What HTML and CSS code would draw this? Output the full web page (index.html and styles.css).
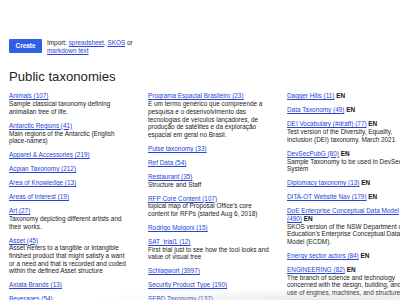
FILE: index.html
```html
<!DOCTYPE html>
<html lang="en">
<head>
<meta charset="utf-8">
<title>Public taxonomies</title>
<link rel="stylesheet" href="styles.css">
</head>
<body>
<main class="page">
  <div class="toolbar">
    <button class="btn-create" type="button">Create</button>
    <p class="import">Import: <a href="#">spreadsheet</a>, <a href="#">SKOS</a> or <a href="#">markdown text</a></p>
  </div>
  <h1 class="title">Public taxonomies</h1>
  <div class="columns">
    <ul class="col">
      <li class="entry"><a href="#">Animals (107)</a><p class="desc">Sample classical taxonomy defining animalian tree of life.</p></li>
      <li class="entry"><a href="#">Antarctic Regions (41)</a><p class="desc">Main regions of the Antarctic (English place-names)</p></li>
      <li class="entry"><a href="#">Apparel &amp; Accessories (219)</a></li>
      <li class="entry"><a href="#">Acpian Taxonomy (212)</a></li>
      <li class="entry"><a href="#">Area of Knowledge (13)</a></li>
      <li class="entry"><a href="#">Areas of Interest (19)</a></li>
      <li class="entry"><a href="#">Art (27)</a><p class="desc">Taxonomy depicting different artists and their works.</p></li>
      <li class="entry"><a href="#">Asset (45)</a><p class="desc">Asset Refers to a tangible or intangible finished product that might satisfy a want or a need and that is recorded and coded within the defined Asset structure</p></li>
      <li class="entry"><a href="#">Axiata Brands (13)</a></li>
      <li class="entry"><a href="#">Beverages (54)</a></li>
    </ul>
    <ul class="col">
      <li class="entry"><a href="#">Programa Espacial Brasileiro (23)</a><p class="desc">É um termo genérico que compreende a pesquisa e o desenvolvimento das tecnologias de veículos lançadores, de produção de satélites e da exploração espacial em geral no Brasil.</p></li>
      <li class="entry"><a href="#">Pulse taxonomy (33)</a></li>
      <li class="entry"><a href="#">Ref Data (54)</a></li>
      <li class="entry"><a href="#">Restaurant (35)</a><p class="desc">Structure and Staff</p></li>
      <li class="entry"><a href="#">RFP Core Content (107)</a><p class="desc">topical map of Proposal Office's core content for RFPs (started Aug 6, 2018)</p></li>
      <li class="entry"><a href="#">Rodrigo Molgoni (15)</a></li>
      <li class="entry"><a href="#">SAT_trial1 (12)</a><p class="desc">First trial just to see how the tool looks and value of visual tree</p></li>
      <li class="entry"><a href="#">Schlagwort (3997)</a></li>
      <li class="entry"><a href="#">Security Product Type (190)</a></li>
      <li class="entry"><a href="#">SEBD Taxonomy (137)</a></li>
    </ul>
    <ul class="col">
      <li class="entry"><a href="#">Dagger Hills (11)</a> <b class="lang">EN</b></li>
      <li class="entry"><a href="#">Data Taxonomy (49)</a> <b class="lang">EN</b></li>
      <li class="entry"><a href="#">DEI Vocabulary (#draft) (77)</a> <b class="lang">EN</b><p class="desc">Test version of the Diversity, Equality, Inclusion (DEI) taxonomy. March 2021</p></li>
      <li class="entry"><a href="#">DevSecPubG (80)</a> <b class="lang">EN</b><p class="desc">Sample Taxonomy to be used in DevSec System</p></li>
      <li class="entry"><a href="#">Diplomacy taxonomy (13)</a> <b class="lang">EN</b></li>
      <li class="entry"><a href="#">DITA-OT Website Nav (179)</a> <b class="lang">EN</b></li>
      <li class="entry"><a href="#">DoE Enterprise Conceptual Data Model (490)</a> <b class="lang">EN</b><p class="desc">SKOS version of the NSW Department of Education's Enterprise Conceptual Data Model (ECDM).</p></li>
      <li class="entry"><a href="#">Energy sector actors (84)</a> <b class="lang">EN</b></li>
      <li class="entry"><a href="#">ENGINEERING (82)</a> <b class="lang">EN</b><p class="desc">The branch of science and technology concerned with the design, building, and use of engines, machines, and structures.</p></li>
    </ul>
  </div>
  <div class="fade"></div>
</main>
</body>
</html>
```

FILE: styles.css
```css
html, body {
  margin: 0;
  padding: 0;
  overflow: hidden;
  background: #fff;
}

body {
  font-family: "Liberation Sans", Arial, Helvetica, sans-serif;
  font-size: 6.4px;
  line-height: 7.7px;
  color: #222;
}

.page {
  position: relative;
  padding: 39px 9px 0 9px;
  width: 400px;
  height: 261px;
}

.toolbar {
  display: flex;
  align-items: flex-start;
  gap: 5px;
}

.btn-create {
  width: 33px;
  height: 14px;
  padding: 0;
  border: none;
  border-radius: 1px;
  background: #2f5fe3;
  color: #fff;
  font-family: inherit;
  font-weight: bold;
  font-size: 6.4px;
  line-height: 14px;
}

.import {
  margin: 0;
  width: 92px;
}

a {
  color: #2744d4;
  text-decoration: underline;
}

.title {
  margin: 15px 0 8px 0;
  font-size: 13.15px;
  line-height: 15px;
  font-weight: normal;
  color: #222;
}

.columns {
  display: grid;
  grid-template-columns: repeat(3, 122px);
  column-gap: 17px;
  align-items: start;
}

.col {
  list-style: none;
  margin: 0;
  padding: 0;
}

.entry {
  margin: 0 0 6.3px 0;
}

.desc {
  margin: 0;
}

.lang {
  font-weight: bold;
  color: #111;
}

.fade {
  position: absolute;
  left: 0;
  right: 0;
  bottom: 0;
  height: 12px;
  background: radial-gradient(ellipse 240px 12px at 330px 100%, rgba(200, 200, 200, 0.4), rgba(200, 200, 200, 0));
  pointer-events: none;
}
```
